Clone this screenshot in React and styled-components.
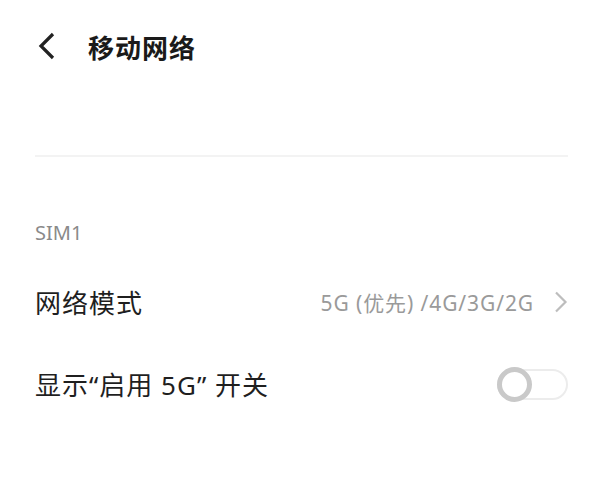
import React, { useState } from "react";
import styled, { createGlobalStyle } from "styled-components";

const Global = createGlobalStyle`
  body {
    margin: 0;
    background: #fff;
    font-family: "Noto Sans CJK SC", "Noto Sans", sans-serif;
  }
`;

const Page = styled.div`
  width: 600px;
  height: 491px;
  background: #fff;
  overflow: hidden;
`;

// barra do topo
const Header = styled.div`
  display: flex;
  align-items: center;
  height: 92px;
  padding-left: 36px;
`;

const Back = styled.button`
  display: flex;
  align-items: center;
  justify-content: center;
  width: 22px;
  height: 30px;
  padding: 0;
  border: none;
  background: none;
  margin-right: 30px;
`;

const Title = styled.h1`
  margin: 0;
  font-size: 26px;
  font-weight: 700;
  color: #1a1a1a;
  letter-spacing: 1px;
`;

const Divider = styled.div`
  margin: 63px 32px 0 35px;
  height: 2px;
  background: #f3f3f3;
`;

const Section = styled.div`
  padding: 62px 32px 0 35px;
`;

const Label = styled.div`
  font-family: "Noto Sans", sans-serif;
  font-size: 20px;
  color: #8a8a8a;
  line-height: 28px;
  margin-bottom: 14px;
`;

const Row = styled.div`
  display: flex;
  align-items: center;
  justify-content: space-between;
  height: 82px;
`;

const RowTitle = styled.span`
  font-family: "Noto Sans", "Noto Sans CJK SC", sans-serif;
  font-size: 26px;
  color: #1f1f1f;
  letter-spacing: 1px;
`;

const Value = styled.span`
  display: flex;
  align-items: center;
  gap: 20px;
  font-family: "Noto Sans", "Noto Sans CJK SC", sans-serif;
  font-size: 21px;
  color: #9a9a9a;
  letter-spacing: 0.9px;
`;

const Toggle = styled.div`
  position: relative;
  width: 71px;
  height: 31px;
  box-sizing: border-box;
  border: 2px solid #ececec;
  border-radius: 16px;
  background: #fff;
`;

const Knob = styled.div`
  position: absolute;
  top: -4px;
  left: -2px;
  width: 35px;
  height: 35px;
  box-sizing: border-box;
  border: 5px solid #c9c9c9;
  border-radius: 50%;
  background: #fff;
`;

const Chevron = () => (
  <svg width="14" height="22" viewBox="0 0 14 22">
    <path d="M2 1.5 L11.5 11 L2 20.5" fill="none" stroke="#bdbdbd" strokeWidth="2.2" />
  </svg>
);

const App = () => {
  const [on] = useState(false);
  return (
    <Page>
      <Global />
      <Header>
        <Back>
          <svg width="20" height="28" viewBox="0 0 20 28">
            <path d="M16 2 L4 14 L16 26" fill="none" stroke="#222" strokeWidth="3.2" />
          </svg>
        </Back>
        <Title>移动网络</Title>
      </Header>
      <Divider />
      <Section>
        <Label>SIM1</Label>
        <Row>
          <RowTitle>网络模式</RowTitle>
          <Value>
            5G (优先) /4G/3G/2G
            <Chevron />
          </Value>
        </Row>
        <Row>
          <RowTitle>显示“启用 5G” 开关</RowTitle>
          <Toggle>
            <Knob style={{ left: on ? 36 : -2 }} />
          </Toggle>
        </Row>
      </Section>
    </Page>
  );
};

export default App;
